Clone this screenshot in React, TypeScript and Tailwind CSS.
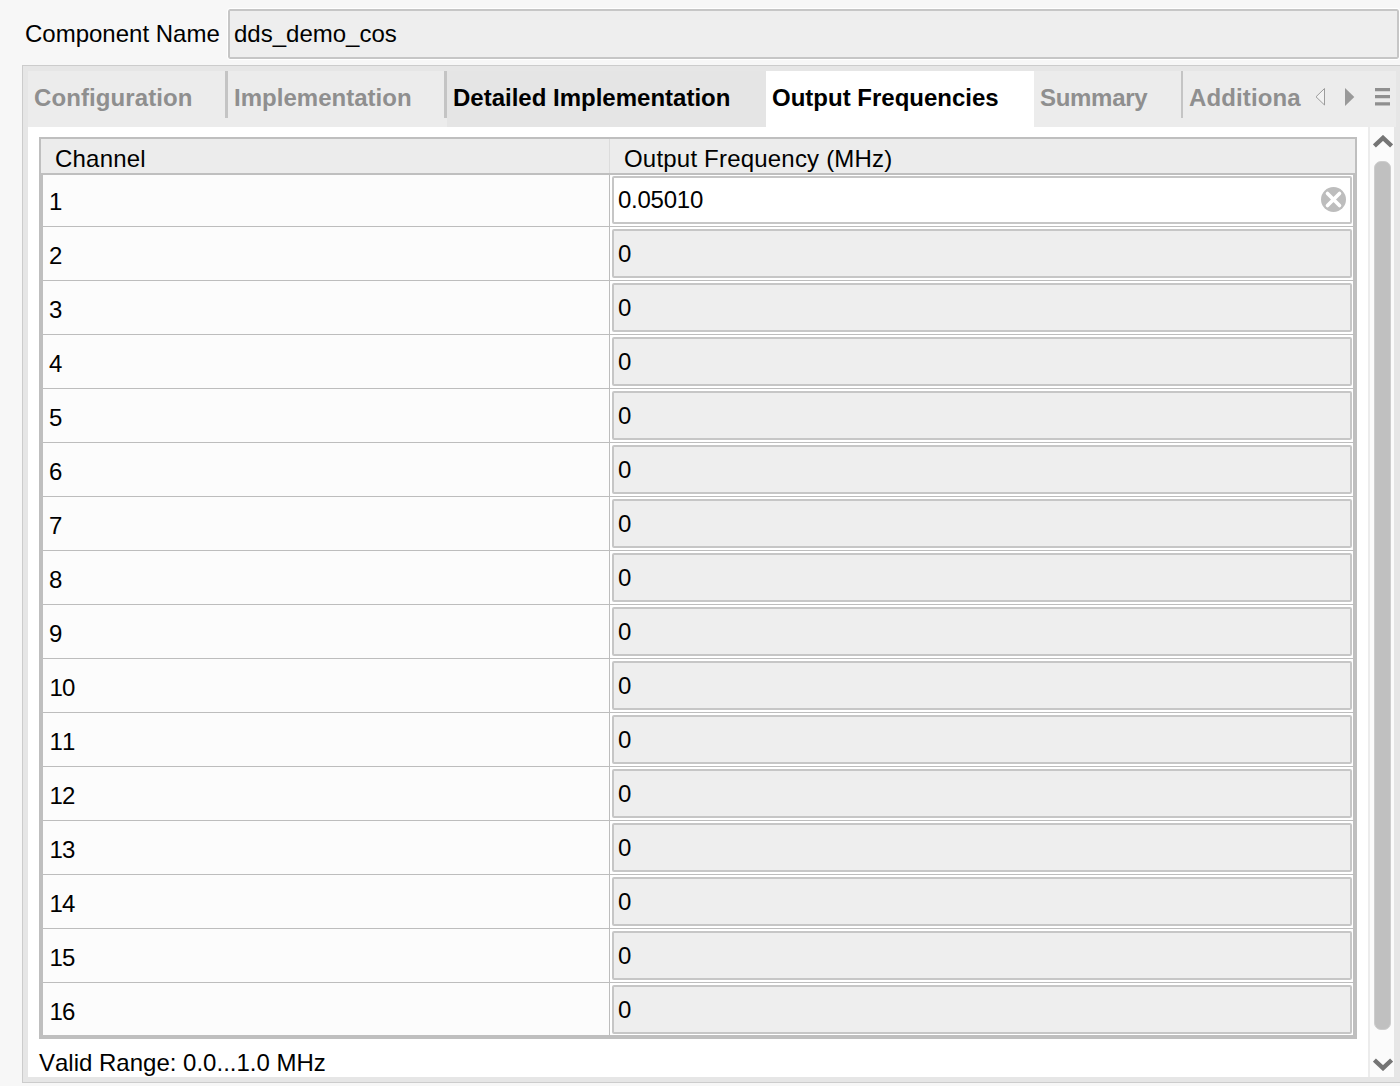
import React from "react";

const channels = Array.from({ length: 16 }, (_, i) => ({
  id: i + 1,
  value: i === 0 ? "0.05010" : "0",
}));

function Tab({ label, className }: { label: string; className: string }) {
  return (
    <div className={`h-[56px] shrink-0 overflow-hidden whitespace-nowrap font-bold leading-[54px] ${className}`}>
      {label}
    </div>
  );
}

function Divider({ className }: { className: string }) {
  return <div className={`h-[47px] shrink-0 bg-[#c4c4c4] ${className}`} />;
}

function TabBar() {
  return (
    <div className="flex h-[56px] w-[1368px] bg-[#ececec] text-[#8f8f8f]">
      <Tab label="Configuration" className="w-[197px] pl-[6px] tracking-[0.1px]" />
      <Divider className="w-[3px]" />
      <Tab label="Implementation" className="w-[216px] pl-[6px] tracking-[0.02px]" />
      <Divider className="w-[3px]" />
      <Tab label="Detailed Implementation" className="w-[319px] bg-[#e5e5e5] pl-[6px] text-black" />
      <Tab label="Output Frequencies" className="w-[268px] bg-white pl-[6px] text-black" />
      <Tab label="Summary" className="w-[147px] pl-[6px] tracking-[-0.3px]" />
      <Divider className="w-[2px]" />
      <Tab label="Additiona" className="w-[126px] pl-[6px] tracking-[0.12px]" />
      <div className="flex h-[52px] items-center pl-[7px]">
        <svg width="10" height="18" viewBox="0 0 10 18" className="shrink-0 overflow-visible">
          <path d="M8.5 0.5V17L0 8.8Z" fill="#f2f2f2" stroke="#9c9c9c" strokeWidth="1" />
        </svg>
        <svg width="10" height="18" viewBox="0 0 10 18" className="ml-[19px] shrink-0">
          <path d="M0 0V18L9.3 9Z" fill="#999999" />
        </svg>
        <svg width="15" height="18" viewBox="0 0 15 18" className="ml-[20px] shrink-0">
          <path d="M0 0H15V3.3H0ZM0 7H15V10.3H0ZM0 14.2H15V17.5H0Z" fill="#8f8f8f" />
        </svg>
      </div>
    </div>
  );
}

function ChannelTable() {
  return (
    <div className="h-[902px] w-[1318px] bg-[#bfbfbf]">
      <div className="flex h-[38px] border-2 border-[#bfbfbf] bg-[#ececec] leading-[39px]">
        <div className="w-[569px] border-r border-[#dcdcdc] pl-[14px] tracking-[0.2px]">Channel</div>
        <div className="pl-[14px] tracking-[0.2px]">Output Frequency (MHz)</div>
      </div>
      <div className="mx-[4px] flex h-[860px] w-[1310px] flex-col">
        {channels.map(({ id, value }) => {
          const first = id === 1;
          const last = id === 16;
          return (
            <div
              key={id}
              className={`flex shrink-0 bg-white ${first || last ? "h-[52px]" : "h-[54px]"} ${
                last ? "" : "border-b border-[#bdbdbd]"
              }`}
            >
              <div
                className={`w-[567px] shrink-0 border-r border-[#bdbdbd] bg-[#fcfcfc] tracking-[-0.8px] [font-kerning:none] ${
                  first ? "leading-[53px]" : "leading-[57px]"
                } ${id > 9 ? "pl-[6.5px]" : "pl-[6px]"}`}
              >
                {id}
              </div>
              <div
                className={`ml-[2px] flex w-[740px] shrink-0 items-center justify-between rounded-[2px] border-2 border-[#c6c6c6] pl-[4px] pr-[4px] ${
                  first ? "mt-px h-[48px] bg-white" : "mt-[2px] h-[49px] bg-[#eeeeee]"
                }`}
              >
                <span className="tracking-[-0.25px]">{value}</span>
                {first && (
                  <svg width="25" height="25" viewBox="0 0 25 25" className="mb-[2px]">
                    <circle cx="12.5" cy="12.5" r="12.5" fill="#bdbdbd" />
                    <path d="M6.5 6.5L18.5 18.5M18.5 6.5L6.5 18.5" stroke="white" strokeWidth="3.6" strokeLinecap="round" />
                  </svg>
                )}
              </div>
            </div>
          );
        })}
      </div>
    </div>
  );
}

function ScrollBar() {
  return (
    <div className="flex w-[26px] shrink-0 flex-col items-center border-l-2 border-[#ececec] bg-[#fbfbfb]">
      <svg width="20" height="14" viewBox="0 0 20 14" className="mt-[8px] ml-[2px] shrink-0">
        <path d="M1.4 11L10 2.9L18.6 11" fill="none" stroke="#757575" strokeWidth="4.4" />
      </svg>
      <div className="mt-[12px] h-[869px] w-[17px] shrink-0 rounded-[7px] border border-[#cdcdcd] bg-[#c0c0c0]" />
      <svg width="20" height="14" viewBox="0 0 20 14" className="mt-[27px] ml-[2px] shrink-0">
        <path d="M1.4 3L10 11.1L18.6 3" fill="none" stroke="#757575" strokeWidth="4.4" />
      </svg>
    </div>
  );
}

export default function App() {
  return (
    <div className="h-[1086px] w-[1400px] overflow-hidden bg-[#f7f7f7] font-['Liberation_Sans',Arial,sans-serif] text-[24px] text-black">
      <div className="flex h-[65px] pt-[9px]">
        <div className="w-[228px] shrink-0 pl-[25px] leading-[50px]">Component Name</div>
        <div className="h-[50px] w-[1171px] rounded-[2px] border-2 border-[#c6c6c6] bg-[#eeeeee] pl-[4px] leading-[46px] outline-1 outline-white">
          dds_demo_cos
        </div>
      </div>
      <div className="ml-[22px] h-[1018px] w-[1378px] border-y border-l border-[#cccccc] bg-[#e6e6e6] pl-[5px] pt-[5px]">
        <TabBar />
        <div className="flex h-[950px] w-[1366px] bg-white">
          <div className="w-[1340px] shrink-0 pl-[11px] pt-[10px]">
            <ChannelTable />
            <div className="leading-[48px] [font-kerning:none]">Valid Range: 0.0...1.0 MHz</div>
          </div>
          <ScrollBar />
        </div>
      </div>
    </div>
  );
}
